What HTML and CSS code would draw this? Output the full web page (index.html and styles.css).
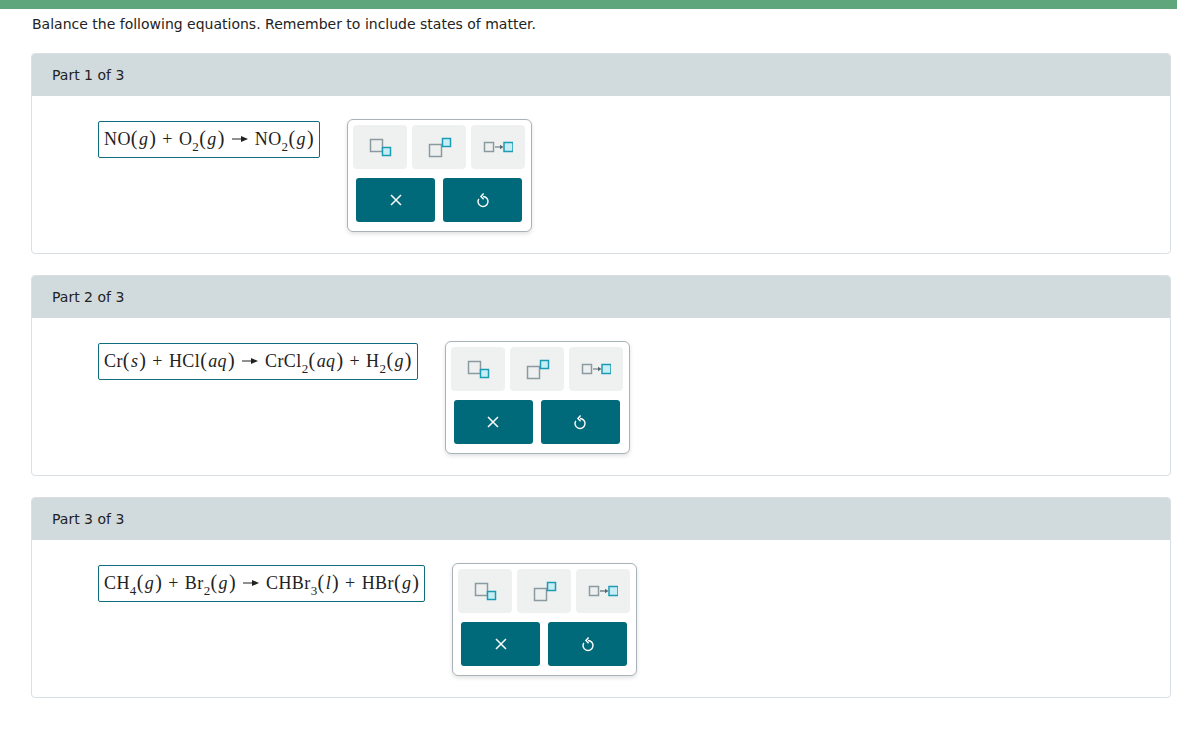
FILE: index.html
```html
<!DOCTYPE html>
<html lang="en">

<head>
    <meta charset="UTF-8">
    <title>Balance the following equations</title>
    <link rel="stylesheet" href="styles.css">
</head>

<body>
    <div class="top-bar"></div>

    <div class="content">
        <p class="intro">Balance the following equations. Remember to include states of matter.</p>

        <!-- Part 1 -->
        <div class="part">
            <div class="part-header">Part 1 of 3</div>
            <div class="part-body">
                <div class="equation">NO<span class="paren">(</span><i>g</i><span class="paren">)</span><span class="op">+</span>O<sub>2</sub><span class="paren">(</span><i>g</i><span class="paren">)</span><svg class="arrow" width="16" height="8" viewBox="0 0 16 8"><line x1="0" y1="4" x2="10" y2="4" stroke="#222" stroke-width="1.2"/><polygon points="9,1 16,4 9,7" fill="#222"/></svg>NO<sub>2</sub><span class="paren">(</span><i>g</i><span class="paren">)</span></div>
                <div class="tools">
                    <div class="tool-row">
                        <button class="tool"><svg width="26" height="22" viewBox="0 0 26 22"><rect x="3.5" y="3.5" width="12" height="12" fill="#eef0f0" stroke="#8b9aa0" stroke-width="1.5"/><rect x="15.5" y="11.5" width="8" height="8" fill="#c7eef4" stroke="#1b9cb4" stroke-width="1.5"/></svg></button>
                        <button class="tool"><svg width="26" height="22" viewBox="0 0 26 22"><rect x="3.5" y="8.5" width="12" height="12" fill="#eef0f0" stroke="#8b9aa0" stroke-width="1.5"/><rect x="16.5" y="2.5" width="8" height="8" fill="#c7eef4" stroke="#1b9cb4" stroke-width="1.5"/></svg></button>
                        <button class="tool"><svg width="30" height="22" viewBox="0 0 30 22"><rect x="1.5" y="6.5" width="9" height="9" fill="#eef0f0" stroke="#8b9aa0" stroke-width="1.5"/><line x1="12" y1="11" x2="18" y2="11" stroke="#58686e" stroke-width="1.2"/><polygon points="17,8.8 20.5,11 17,13.2" fill="#58686e"/><rect x="21" y="6.5" width="9" height="9" fill="#c7eef4" stroke="#1b9cb4" stroke-width="1.5"/></svg></button>
                    </div>
                    <div class="action-row">
                        <button class="action"><svg width="14" height="14" viewBox="0 0 14 14"><path d="M2 2 L12 12 M12 2 L2 12" stroke="#fff" stroke-width="1.5"/></svg></button>
                        <button class="action"><svg width="14" height="16" viewBox="0 0 14 16"><path d="M7 4.5 A5 5 0 1 1 2.8 6.8" fill="none" stroke="#fff" stroke-width="1.4"/><path d="M7.6 1.6 L4.9 4.5 L7.6 7.2" fill="none" stroke="#fff" stroke-width="1.4"/></svg></button>
                    </div>
                </div>
            </div>
        </div>

        <!-- Part 2 -->
        <div class="part">
            <div class="part-header">Part 2 of 3</div>
            <div class="part-body">
                <div class="equation">Cr<span class="paren">(</span><i>s</i><span class="paren">)</span><span class="op">+</span>HCl<span class="paren">(</span><i>aq</i><span class="paren">)</span><svg class="arrow" width="16" height="8" viewBox="0 0 16 8"><line x1="0" y1="4" x2="10" y2="4" stroke="#222" stroke-width="1.2"/><polygon points="9,1 16,4 9,7" fill="#222"/></svg>CrCl<sub>2</sub><span class="paren">(</span><i>aq</i><span class="paren">)</span><span class="op">+</span>H<sub>2</sub><span class="paren">(</span><i>g</i><span class="paren">)</span></div>
                <div class="tools">
                    <div class="tool-row">
                        <button class="tool"><svg width="26" height="22" viewBox="0 0 26 22"><rect x="3.5" y="3.5" width="12" height="12" fill="#eef0f0" stroke="#8b9aa0" stroke-width="1.5"/><rect x="15.5" y="11.5" width="8" height="8" fill="#c7eef4" stroke="#1b9cb4" stroke-width="1.5"/></svg></button>
                        <button class="tool"><svg width="26" height="22" viewBox="0 0 26 22"><rect x="3.5" y="8.5" width="12" height="12" fill="#eef0f0" stroke="#8b9aa0" stroke-width="1.5"/><rect x="16.5" y="2.5" width="8" height="8" fill="#c7eef4" stroke="#1b9cb4" stroke-width="1.5"/></svg></button>
                        <button class="tool"><svg width="30" height="22" viewBox="0 0 30 22"><rect x="1.5" y="6.5" width="9" height="9" fill="#eef0f0" stroke="#8b9aa0" stroke-width="1.5"/><line x1="12" y1="11" x2="18" y2="11" stroke="#58686e" stroke-width="1.2"/><polygon points="17,8.8 20.5,11 17,13.2" fill="#58686e"/><rect x="21" y="6.5" width="9" height="9" fill="#c7eef4" stroke="#1b9cb4" stroke-width="1.5"/></svg></button>
                    </div>
                    <div class="action-row">
                        <button class="action"><svg width="14" height="14" viewBox="0 0 14 14"><path d="M2 2 L12 12 M12 2 L2 12" stroke="#fff" stroke-width="1.5"/></svg></button>
                        <button class="action"><svg width="14" height="16" viewBox="0 0 14 16"><path d="M7 4.5 A5 5 0 1 1 2.8 6.8" fill="none" stroke="#fff" stroke-width="1.4"/><path d="M7.6 1.6 L4.9 4.5 L7.6 7.2" fill="none" stroke="#fff" stroke-width="1.4"/></svg></button>
                    </div>
                </div>
            </div>
        </div>

        <!-- Part 3 -->
        <div class="part">
            <div class="part-header">Part 3 of 3</div>
            <div class="part-body">
                <div class="equation">CH<sub>4</sub><span class="paren">(</span><i>g</i><span class="paren">)</span><span class="op">+</span>Br<sub>2</sub><span class="paren">(</span><i>g</i><span class="paren">)</span><svg class="arrow" width="16" height="8" viewBox="0 0 16 8"><line x1="0" y1="4" x2="10" y2="4" stroke="#222" stroke-width="1.2"/><polygon points="9,1 16,4 9,7" fill="#222"/></svg>CHBr<sub>3</sub><span class="paren">(</span><i>l</i><span class="paren">)</span><span class="op">+</span>HBr<span class="paren">(</span><i>g</i><span class="paren">)</span></div>
                <div class="tools">
                    <div class="tool-row">
                        <button class="tool"><svg width="26" height="22" viewBox="0 0 26 22"><rect x="3.5" y="3.5" width="12" height="12" fill="#eef0f0" stroke="#8b9aa0" stroke-width="1.5"/><rect x="15.5" y="11.5" width="8" height="8" fill="#c7eef4" stroke="#1b9cb4" stroke-width="1.5"/></svg></button>
                        <button class="tool"><svg width="26" height="22" viewBox="0 0 26 22"><rect x="3.5" y="8.5" width="12" height="12" fill="#eef0f0" stroke="#8b9aa0" stroke-width="1.5"/><rect x="16.5" y="2.5" width="8" height="8" fill="#c7eef4" stroke="#1b9cb4" stroke-width="1.5"/></svg></button>
                        <button class="tool"><svg width="30" height="22" viewBox="0 0 30 22"><rect x="1.5" y="6.5" width="9" height="9" fill="#eef0f0" stroke="#8b9aa0" stroke-width="1.5"/><line x1="12" y1="11" x2="18" y2="11" stroke="#58686e" stroke-width="1.2"/><polygon points="17,8.8 20.5,11 17,13.2" fill="#58686e"/><rect x="21" y="6.5" width="9" height="9" fill="#c7eef4" stroke="#1b9cb4" stroke-width="1.5"/></svg></button>
                    </div>
                    <div class="action-row">
                        <button class="action"><svg width="14" height="14" viewBox="0 0 14 14"><path d="M2 2 L12 12 M12 2 L2 12" stroke="#fff" stroke-width="1.5"/></svg></button>
                        <button class="action"><svg width="14" height="16" viewBox="0 0 14 16"><path d="M7 4.5 A5 5 0 1 1 2.8 6.8" fill="none" stroke="#fff" stroke-width="1.4"/><path d="M7.6 1.6 L4.9 4.5 L7.6 7.2" fill="none" stroke="#fff" stroke-width="1.4"/></svg></button>
                    </div>
                </div>
            </div>
        </div>
    </div>
</body>

</html>
```

FILE: styles.css
```css
/* Page */
body {
    margin: 0;
    font-family: 'DejaVu Sans', Verdana, sans-serif;
    font-size: 14px;
    color: #222;
    background: #ffffff;
}

.top-bar {
    height: 9px;
    background-color: #60a67c;
}

.content {
    padding: 0 6px 0 31px;
}

.intro {
    margin: 7px 0 20px 1px;
    line-height: 17px;
}

/* Part cards */
.part {
    border: 1px solid #d9dfe2;
    border-radius: 4px;
    margin-bottom: 21px;
    overflow: hidden;
}

.part-header {
    height: 42px;
    line-height: 42px;
    padding-left: 20px;
    background-color: #d1dadd;
    color: #222;
}

.part-body {
    display: flex;
    align-items: flex-start;
    gap: 27px;
    padding: 23px 0 21px 66px;
}

/* Equation */
.equation {
    margin-top: 2px;
    border: 1px solid #0f6e7e;
    border-radius: 2px;
    padding: 0 5px;
    height: 35px;
    line-height: 33px;
    white-space: nowrap;
    letter-spacing: 0.4px;
    font-family: 'Liberation Serif', 'Times New Roman', serif;
    font-size: 18px;
    color: #222;
}

.equation i {
    font-style: italic;
    padding: 0 1px;
}

.equation sub {
    font-size: 13px;
    vertical-align: -6px;
    line-height: 0;
}

.paren {
    font-size: 20px;
}

.op {
    margin: 0 6px;
}

.arrow {
    margin: 0 7px;
    vertical-align: 2px;
}

/* Tool panel */
.tools {
    border: 1px solid #a8b3b8;
    border-radius: 6px;
    padding: 5px 5px 9px 5px;
    box-shadow: 0 2px 4px rgba(0, 0, 0, 0.12);
    background: #fff;
}

.tool-row {
    display: flex;
    gap: 5px;
}

.tool {
    width: 54px;
    height: 44px;
    border: none;
    border-radius: 4px;
    background-color: #eff1f1;
    display: flex;
    align-items: center;
    justify-content: center;
    padding: 0;
    cursor: pointer;
}

.action-row {
    display: flex;
    gap: 8px;
    margin-top: 9px;
    padding: 0 4px 0 3px;
}

.action {
    width: 79px;
    height: 44px;
    border: none;
    border-radius: 3px;
    background-color: #006a7a;
    display: flex;
    align-items: center;
    justify-content: center;
    padding: 0;
    cursor: pointer;
}
```
